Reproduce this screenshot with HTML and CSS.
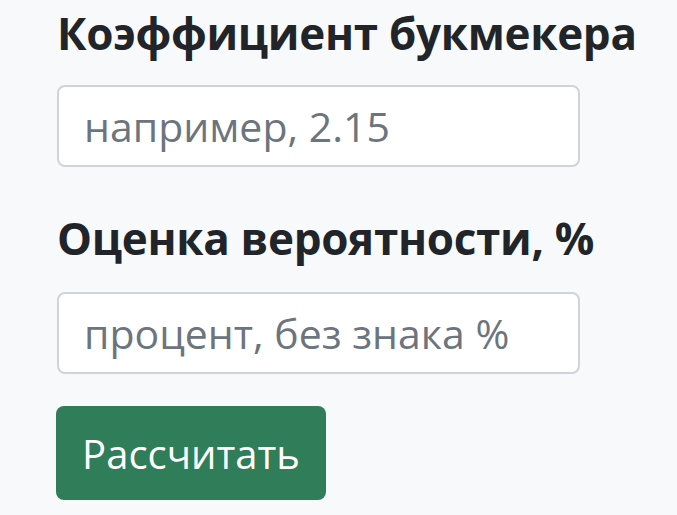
FILE: index.html
```html
<!DOCTYPE html>
<html lang="ru">
<head>
<meta charset="utf-8">
<title>Калькулятор</title>
<link rel="stylesheet" href="styles.css">
</head>
<body>
<form class="calc">
  <div class="field field-first">
    <label class="field-label" for="odds">Коэффициент букмекера</label>
    <input class="field-input" id="odds" type="text" placeholder="например, 2.15">
  </div>
  <div class="field field-second">
    <label class="field-label" for="prob">Оценка вероятности, %</label>
    <input class="field-input" id="prob" type="text" placeholder="процент, без знака %">
  </div>
  <button class="calc-btn" type="button">Рассчитать</button>
</form>
</body>
</html>
```

FILE: styles.css
```css
html, body {
  margin: 0;
  padding: 0;
  background: #f8f9fa;
}

body {
  font-family: "Open Sans", "Liberation Sans", sans-serif;
  color: #212529;
}

.calc {
  display: flex;
  flex-direction: column;
  align-items: flex-start;
  padding: 7px 0 0 57px;
}

.field {
  display: flex;
  flex-direction: column;
  align-items: flex-start;
}

.field-second {
  margin-top: 45px;
}

.field-label {
  font-size: 44px;
  font-weight: 700;
  line-height: 53px;
  letter-spacing: -0.3px;
  white-space: nowrap;
  margin-bottom: 25px;
}

.field-second .field-label {
  margin-bottom: 27px;
}

.field-input {
  box-sizing: border-box;
  width: 523px;
  height: 82px;
  margin: 0;
  padding: 0 0 0 25px;
  border: 2px solid #ced4da;
  border-radius: 8px;
  background: #fff;
  font-family: inherit;
  font-size: 41px;
  color: #495057;
  outline: none;
}

.field-input::placeholder {
  color: #6c757d;
  opacity: 1;
}

.calc-btn {
  box-sizing: border-box;
  margin-top: 32px;
  margin-left: -1px;
  width: 270px;
  height: 94px;
  padding: 0;
  border: none;
  border-radius: 8px;
  background: #2f7d59;
  color: #fff;
  font-family: inherit;
  font-size: 40px;
  cursor: pointer;
}
```
